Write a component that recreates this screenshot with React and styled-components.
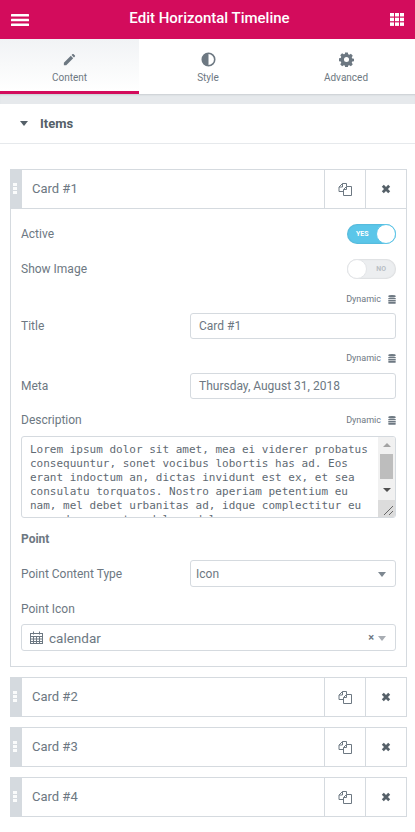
import React from 'react';
import styled, { createGlobalStyle } from 'styled-components';

const Global = createGlobalStyle`
  html, body { margin: 0; padding: 0; background: #fff; }
  * { box-sizing: border-box; }
  body { font-family: Roboto, "Liberation Sans", sans-serif; overflow: hidden; }
`;

const Page = styled.div`width: 415px; height: 832px; overflow: hidden; background: #fff;`;

const Header = styled.header`
  height: 39px; background: #d30c5c; color: #fff; display: flex; align-items: center;
  justify-content: space-between; padding: 0 11px;
`;
const HeaderTitle = styled.div`font-size: 15px; font-weight: 500; line-height: 20px; margin-bottom: 4px;`;
const HeaderIcon = styled.svg`display: block; fill: #fff;`;

const Tabs = styled.nav`display: flex; height: 55px;`;
const Tab = styled.div`
  flex: ${p => p.$active ? '0 0 139px' : '1'}; display: flex; flex-direction: column; align-items: center; padding-top: 13px;
  color: #6d7882; font-size: 10px; line-height: 12px; gap: 5px;
  background: ${p => p.$active ? 'linear-gradient(#f1f3f5, #fff)' : '#fff'};
  border-bottom: 3px solid ${p => p.$active ? '#d30c5c' : '#fff'};
  svg { display: block; fill: #6d7882; }
`;
const Strip = styled.div`
  height: 10px; background: #e6e9ec; box-shadow: inset 0 2px 2px -1px #c9ced2;
`;

const Section = styled.div`
  height: 40px; border-bottom: 1px solid #e6e9ec; display: flex; align-items: center;
  padding: 0 20px; gap: 12px; font-size: 13px; font-weight: 700; color: #556068;
`;
const Caret = styled.span`
  width: 0; height: 0; border-left: 4px solid transparent; border-right: 4px solid transparent;
  border-top: 5px solid #556068;
`;

const List = styled.div`padding: 25px 8px 0 10px; display: flex; flex-direction: column; gap: 10px;`;
const Item = styled.section``;
const ItemHead = styled.div`
  height: 40px; display: flex; border: 1px solid #d5dadf; border-left: 0; background: #fff;
`;
const Handle = styled.div`
  width: 12px; background: #d5dadf; display: flex; flex-direction: column; align-items: center;
  gap: 1.5px; padding-top: 14px; margin-top: -1px; margin-bottom: -1px; padding-right: 2px;
  flex: none;
`;
const Dot = styled.i`width: 4px; height: 2.5px; background: rgba(255,255,255,.9); display: block;`;
const ItemTitle = styled.div`
  flex: 1; padding-left: 10px; font-size: 13px; line-height: 38px; color: #6d7882;
`;
const ItemBtn = styled.div`
  width: ${p => p.$w}px; flex: none; border-left: 1px solid #d5dadf; display: flex; align-items: center;
  justify-content: center;
  svg { display: block; }
`;

const Body = styled.div`
  height: 458px; border: 1px solid #d5dadf; border-top: 0; padding: 0 10px;
  display: flex; flex-direction: column;
`;
const Row = styled.div`
  display: flex; align-items: center; justify-content: space-between; height: ${p => p.$h}px;
  margin-top: ${p => p.$mt || 0}px;
`;
const Label = styled.div`font-size: 12px; color: #6d7882; line-height: 14px;`;
const Toggle = styled.div`
  width: 49px; height: 20px; border-radius: 10px; position: relative; flex: none;
  background: ${p => p.$on ? '#5bc6e9' : '#eceef0'};
  box-shadow: inset 0 0 2px rgba(0,0,0,.18);
`;
const ToggleText = styled.span`
  position: absolute; top: 0; line-height: 20px; font-size: 7px; font-weight: 700;
  ${p => p.$on ? 'left: 9px; color: #fff;' : 'right: 10px; color: #b9bfc5;'}
`;
const Knob = styled.span`
  position: absolute; top: 0; width: 20px; height: 20px; border-radius: 50%; background: #fff;
  ${p => p.$on ? 'right: 0; border: 1px solid #5bc6e9;' : 'left: 0; border: 1px solid #e3e5e8;'}
`;
const DynamicRow = styled.div`
  display: flex; justify-content: flex-end; align-items: center; gap: 7px;
  font-size: 9px; color: #6d7882; height: 12px; margin-top: ${p => p.$mt || 0}px;
`;
const DynamicWrap = styled.div`display: flex; align-items: center; gap: 7px; font-size: 9px; color: #6d7882;`;
const Input = styled.div`
  width: ${p => p.$full ? 375 : 206}px; height: ${p => p.$h || 26}px; border: 1px solid #d5dadf; border-radius: 3px;
  font-size: 12px; color: #6d7882; padding-left: ${p => p.$pl || 8}px; display: flex; align-items: center;
  position: relative; flex: none; margin-top: ${p => p.$mt || 0}px;
`;
const SelectCaret = styled.span`
  position: absolute; right: ${p => p.$r}px; top: 11px; width: 0; height: 0;
  border-left: 4px solid transparent; border-right: 4px solid transparent;
  border-top: 5px solid ${p => p.$c};
`;
const Clear = styled.span`
  position: absolute; right: 21px; top: 6px; font-size: 11px; line-height: 14px; font-weight: 700; color: #6d7882;
`;
const TextBox = styled.div`
  height: 82px; width: 375px; margin-top: 9px; border: 1px solid #d5dadf; border-radius: 3px;
  display: flex; overflow: hidden; flex: none;
`;
const TextContent = styled.div`
  flex: 1; padding: 6px 0 0 8px; font-family: "DejaVu Sans Mono", monospace; font-size: 11px;
  line-height: 14px; color: #5f6a73; white-space: pre; overflow: hidden;
`;
const ScrollBar = styled.div`
  width: 17px; flex: none; background: #f1f1f1; display: flex; flex-direction: column; align-items: center;
`;
const ScrollUp = styled.span`
  margin-top: 6px; width: 0; height: 0; border-left: 4px solid transparent; border-right: 4px solid transparent;
  border-bottom: 4px solid #a3a3a3;
`;
const ScrollThumb = styled.span`margin-top: 7px; width: 13px; height: 25px; background: #bdbdbd;`;
const ScrollDown = styled.span`
  margin-top: 9px; width: 0; height: 0; border-left: 4px solid transparent; border-right: 4px solid transparent;
  border-top: 4px solid #505050;
`;
const Resizer = styled.div`
  margin-top: auto; width: 17px; height: 17px; background: #dcdcdc; position: relative;
  svg { position: absolute; right: 1px; bottom: 1px; display: block; }
`;
const SubHead = styled.div`
  font-size: 12px; font-weight: 700; color: #6d7882; line-height: 14px; margin-top: 14px;
`;
const IconText = styled.span`font-size: 13.5px; color: #6d7882; margin-left: 6px;`;

const PencilIcon = () => (
  <svg width="15" height="15" viewBox="0 0 24 24"><path d="M3 17.200V21h3.800L17.900 9.900l-3.800-3.800L3 17.200zM20.700 7.100c.4-.4.4-1 0-1.400l-2.400-2.400c-.4-.4-1-.4-1.400 0l-1.600 1.600 3.800 3.800 1.600-1.600z"/></svg>
);
const ContrastIcon = () => (
  <svg width="15" height="15" viewBox="0 0 16 16"><path fillRule="evenodd" d="M8 .5a7.500 7.500 0 1 0 0 15 7.500 7.500 0 0 0 0-15zM8 2.200v11.600a5.800 5.800 0 0 0 0-11.600z"/></svg>
);
const GearIcon = () => (
  <svg width="15" height="15" viewBox="0 0 16 16"><path fillRule="evenodd" d="M6.600.5h2.800l.4 2 1.200.5 1.700-1.100 2 2-1.100 1.700.5 1.200 2 .4v2.600l-2 .4-.5 1.200 1.100 1.700-2 2-1.700-1.100-1.200.5-.4 2H6.600l-.4-2-1.200-.5-1.700 1.100-2-2 1.100-1.700-.5-1.200-2-.4V6.700l2-.4.5-1.200-1.100-1.700 2-2 1.700 1.100 1.200-.5.4-2zM8 5.300a2.700 2.700 0 1 0 0 5.400 2.700 2.700 0 0 0 0-5.400z"/></svg>
);
const DbIcon = () => (
  <svg width="8" height="9" viewBox="0 0 8 9" fill="#6d7882"><ellipse cx="4" cy="1.300" rx="3.800" ry="1.300"/><rect x=".2" y="2.900" width="7.600" height="1.400" rx=".5"/><rect x=".2" y="5" width="7.600" height="1.400" rx=".5"/><rect x=".2" y="7.100" width="7.600" height="1.700" rx=".7"/></svg>
);
const CopyIcon = () => (
  <svg width="14" height="13" viewBox="0 0 14 13" fill="none" stroke="#6d7882" strokeWidth="1"><path d="M8.500 3V.5H4.500L1 4v4.500h4M4.500.5V4H1"/><path d="M8.500 3.500h5v9h-8V6.500zM8.500 3.500v3h-3"/></svg>
);
const CloseIcon = () => (
  <svg width="10" height="10" viewBox="0 0 10 10"><path d="M1.800 1.800l6.400 6.400M8.200 1.800L1.800 8.200" stroke="#556068" strokeWidth="2.800" strokeLinecap="butt"/></svg>
);
const CalendarIcon = () => (
  <svg width="13" height="13" viewBox="0 0 13 13" fill="none" stroke="#6d7882" strokeWidth="1"><rect x=".5" y="2.500" width="12" height="10"/><path d="M.5 5.500h12M.5 8h12M.5 10.500h12M3.500 5.500v7M6.500 5.500v7M9.500 5.500v7M3.500 .5v3M9.500 .5v3"/></svg>
);

const Card = ({ name }) => (
  <ItemHead>
    <Handle><Dot /><Dot /><Dot /></Handle>
    <ItemTitle>{name}</ItemTitle>
    <ItemBtn $w={41}><CopyIcon /></ItemBtn>
    <ItemBtn $w={41}><CloseIcon /></ItemBtn>
  </ItemHead>
);

const Dynamic = ({ mt }) => (
  <DynamicRow $mt={mt}>Dynamic<DbIcon /></DynamicRow>
);

const lorem = `Lorem ipsum dolor sit amet, mea ei viderer probatus
consequuntur, sonet vocibus lobortis has ad. Eos
erant indoctum an, dictas invidunt est ex, et sea
consulatu torquatos. Nostro aperiam petentium eu
nam, mel debet urbanitas ad, idque complectitur eu
eros duo eam ut eadel suadel`;

export default function App() {
  return (
    <Page>
      <Global />
      <Header>
        <HeaderIcon width="18" height="12" viewBox="0 0 18 12"><rect width="18" height="2.500" rx=".5" /><rect y="4.700" width="18" height="2.500" rx=".5" /><rect y="9.400" width="18" height="2.500" rx=".5" /></HeaderIcon>
        <HeaderTitle>Edit Horizontal Timeline</HeaderTitle>
        <HeaderIcon width="14" height="13" viewBox="0 0 14 13"><rect width="4" height="3.500"/><rect x="5" width="4" height="3.500"/><rect x="10" width="4" height="3.500"/><rect y="4.700" width="4" height="3.500"/><rect x="5" y="4.700" width="4" height="3.500"/><rect x="10" y="4.700" width="4" height="3.500"/><rect y="9.400" width="4" height="3.500"/><rect x="5" y="9.400" width="4" height="3.500"/><rect x="10" y="9.400" width="4" height="3.500"/></HeaderIcon>
      </Header>
      <Tabs>
        <Tab $active><PencilIcon />Content</Tab>
        <Tab><ContrastIcon />Style</Tab>
        <Tab><GearIcon />Advanced</Tab>
      </Tabs>
      <Strip />
      <Section><Caret />Items</Section>
      <List>
        <Item>
          <Card name="Card #1" />
          <Body>
            <Row $h={20} $mt={15}><Label>Active</Label><Toggle $on><ToggleText $on>YES</ToggleText><Knob $on /></Toggle></Row>
            <Row $h={20} $mt={15}><Label>Show Image</Label><Toggle><ToggleText>NO</ToggleText><Knob /></Toggle></Row>
            <Dynamic mt={14} />
            <Row $h={26} $mt={8}><Label>Title</Label><Input>Card #1</Input></Row>
            <Dynamic mt={13} />
            <Row $h={26} $mt={9}><Label>Meta</Label><Input>Thursday, August 31, 2018</Input></Row>
            <Row $h={14} $mt={14}><Label>Description</Label><DynamicWrap>Dynamic<DbIcon /></DynamicWrap></Row>
            <TextBox>
              <TextContent>{lorem}</TextContent>
              <ScrollBar>
                <ScrollUp />
                <ScrollThumb />
                <ScrollDown />
                <Resizer><svg width="11" height="11" viewBox="0 0 11 11" stroke="#666" strokeWidth="1"><path d="M1 10L10 1M6 10l4-4"/></svg></Resizer>
              </ScrollBar>
            </TextBox>
            <SubHead>Point</SubHead>
            <Row $h={27} $mt={14}><Label>Point Content Type</Label><Input $h={27} $pl={5}>Icon<SelectCaret $r={9} $c="#7d8790" /></Input></Row>
            <Row $h={14} $mt={15}><Label>Point Icon</Label></Row>
            <Input $full $h={27} $mt={8}><CalendarIcon /><IconText>calendar</IconText><Clear>×</Clear><SelectCaret $r={9} $c="#a8adb3" /></Input>
          </Body>
        </Item>
        <Item><Card name="Card #2" /></Item>
        <Item><Card name="Card #3" /></Item>
        <Item><Card name="Card #4" /></Item>
      </List>
    </Page>
  );
}
